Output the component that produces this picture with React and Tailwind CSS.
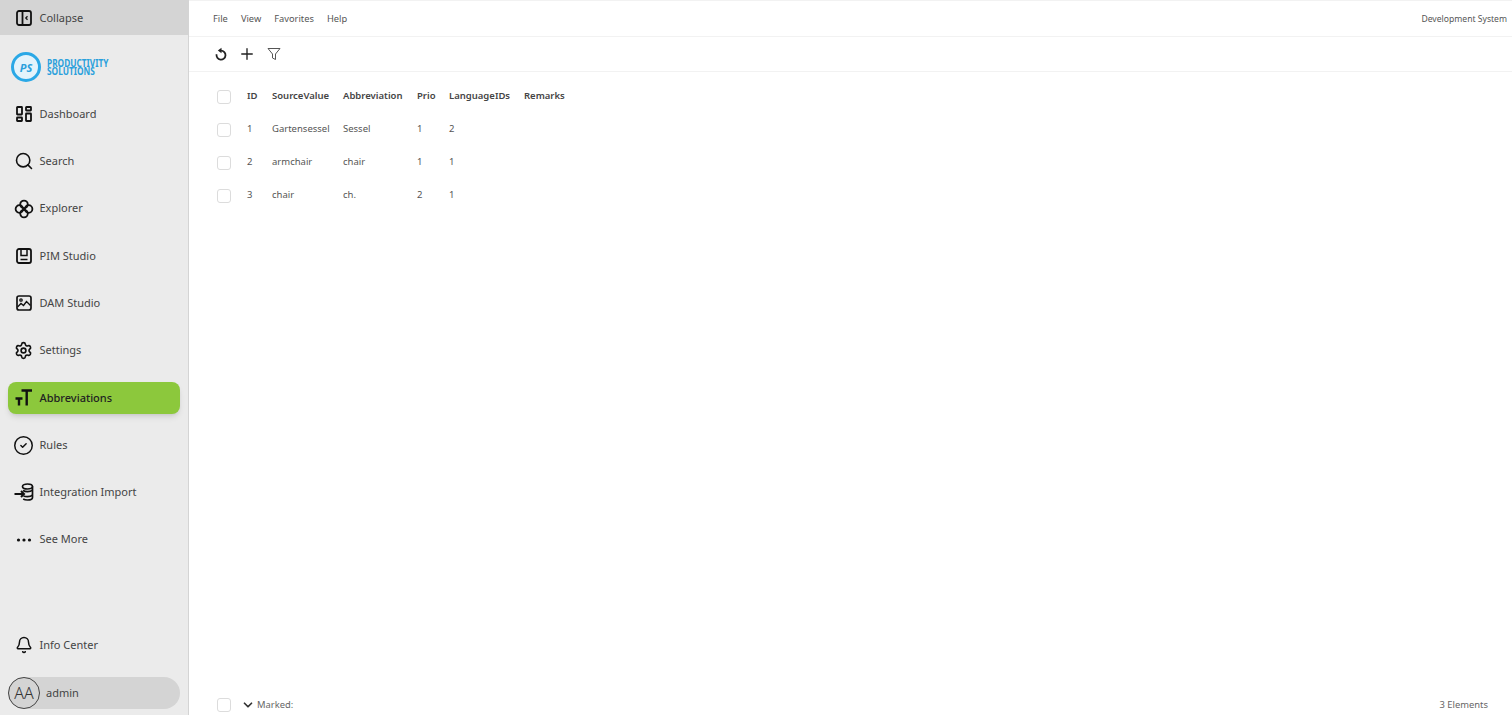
import { Bell, ChevronDown, CircleCheck, Plus, Search, Settings } from 'lucide-react'

const CollapseIcon = () => (
  <svg width="18" height="18" viewBox="0 0 18 18" fill="none" stroke="#111" strokeWidth="1.8">
    <rect x="2" y="2" width="14" height="14" rx="2" />
    <path d="M7.5 2v14" />
    <path d="M12.5 7.2 10.8 9l1.700 1.800" strokeWidth="1.3" />
  </svg>
)

const DashboardIcon = () => (
  <svg width="18" height="18" viewBox="0 0 18 18" fill="none" stroke="#111" strokeWidth="1.8">
    <rect x="2" y="2" width="5" height="7.5" rx="0.5" />
    <rect x="11" y="2" width="5" height="3.500" rx="0.5" />
    <rect x="2" y="12.500" width="5" height="3.500" rx="0.5" />
    <rect x="11" y="8.500" width="5" height="7.500" rx="0.5" />
  </svg>
)

const ExplorerIcon = () => (
  <svg width="20" height="20" viewBox="0 0 20 20" fill="none" stroke="#111" strokeWidth="1.8">
    <circle cx="10" cy="5.4" r="3.8" />
    <circle cx="14.6" cy="10" r="3.8" />
    <circle cx="10" cy="14.6" r="3.8" />
    <circle cx="5.4" cy="10" r="3.8" />
  </svg>
)

const PimIcon = () => (
  <svg width="18" height="18" viewBox="0 0 18 18" fill="none" stroke="#111" strokeWidth="1.8">
    <rect x="2" y="2" width="14" height="14" rx="2" />
    <path d="M6 2v6.500h6V2" strokeWidth="1.5" />
    <path d="M5.500 12.500h7" strokeWidth="1.5" />
  </svg>
)

const DamIcon = () => (
  <svg width="18" height="18" viewBox="0 0 18 18" fill="none" stroke="#111" strokeWidth="1.7">
    <rect x="2" y="2" width="14" height="14" rx="2" />
    <circle cx="6" cy="6" r="1.2" strokeWidth="1.3" />
    <path d="m2.500 13 3.500-3.500 2.500 2 3-4 4 4" strokeWidth="1.4" />
  </svg>
)

const TextSizeIcon = () => (
  <svg width="20" height="20" viewBox="0 0 20 20" fill="none" stroke="#111" strokeWidth="2.4">
    <path d="M7.500 2.500h10.500M12.700 2.500V17.500" />
    <path d="M1.500 10.500h7M5 10.500V17.500" />
  </svg>
)

const ImportIcon = () => (
  <svg width="20" height="20" viewBox="0 0 20 20" fill="none" stroke="#111" strokeWidth="1.7">
    <ellipse cx="13.500" cy="4.500" rx="5" ry="2.500" />
    <path d="M18.500 4.500v11c0 1.500-2.200 2.500-5 2.500-1.800 0-3.300-.4-4.300-1" />
    <path d="M9 8.500c1 .7 2.700 1.200 4.500 1.200 2 0 3.900-.5 5-1.500" />
    <path d="M9.500 14c1 .4 2.500.6 4 .6 2 0 3.900-.5 5-1.500" />
    <path d="M.5 12h9.500M7 9l3 3-3 3" strokeWidth="2" />
  </svg>
)

const MoreIcon = () => (
  <svg width="18" height="18" viewBox="0 0 18 18" fill="#111">
    <circle cx="3.500" cy="9" r="1.600" />
    <circle cx="9" cy="9" r="1.600" />
    <circle cx="14.500" cy="9" r="1.600" />
  </svg>
)

const ResetIcon = () => (
  <svg width="14" height="14" viewBox="0 0 14 14" fill="none" stroke="#222" strokeWidth="1.800">
    <path d="M7 3.600a4.500 4.500 0 1 1-4.400 3.600" />
    <path d="M7.500 .8v5.400L3.800 3.500z" fill="#222" stroke="none" />
  </svg>
)

const FunnelIcon = () => (
  <svg width="14" height="14" viewBox="0 0 14 14" fill="none" stroke="#555" strokeWidth="1">
    <path d="M1 1.500h12L8.500 7v5.500l-3-1.500V7z" strokeLinejoin="round" />
  </svg>
)

const navItems = [
  { label: 'Dashboard', icon: <DashboardIcon /> },
  { label: 'Search', icon: <Search size={20} strokeWidth={1.9} color="#111" /> },
  { label: 'Explorer', icon: <ExplorerIcon /> },
  { label: 'PIM Studio', icon: <PimIcon /> },
  { label: 'DAM Studio', icon: <DamIcon /> },
  { label: 'Settings', icon: <Settings size={19} strokeWidth={2.1} color="#111" /> },
  { label: 'Abbreviations', icon: <TextSizeIcon />, active: true },
  { label: 'Rules', icon: <CircleCheck size={21} strokeWidth={1.7} color="#111" /> },
  { label: 'Integration Import', icon: <ImportIcon /> },
  { label: 'See More', icon: <MoreIcon /> },
]

const rows = [
  { id: 1, source: 'Gartensessel', abbr: 'Sessel', prio: 1, lang: 2 },
  { id: 2, source: 'armchair', abbr: 'chair', prio: 1, lang: 1 },
  { id: 3, source: 'chair', abbr: 'ch.', prio: 2, lang: 1 },
]

const rowClasses = 'grid h-[33px] grid-cols-[30px_25px_71px_74px_32px_75px_60px] items-center'

function Checkbox() {
  return <span className="block h-[14px] w-[14px] rounded-[3px] border border-[#dcdcdc] bg-white" />
}

function NavItem({ label, icon, active }) {
  return (
    <div
      className={
        active
          ? 'mx-2 flex h-8 items-center rounded-lg bg-[#8cc83c] font-medium text-[#222] shadow-md'
          : 'mx-2 flex h-8 items-center text-[#444]'
      }
    >
      <span className="flex w-[31.5px] shrink-0 justify-center">{icon}</span>
      <span className="text-[11px]">{label}</span>
    </div>
  )
}

function Logo() {
  return (
    <div className="ml-[11px] flex h-[30px] items-center gap-[6px]">
      <div className="flex h-[30px] w-[30px] items-center justify-center rounded-full border-[3px] border-[#2aa8e6] bg-[#e3f3fb]">
        <span className="text-[11px] font-bold italic leading-none text-[#2aa0dc]">PS</span>
      </div>
      <div className="flex origin-left scale-x-[0.79] flex-col text-[10.5px] font-bold leading-[8px] text-[#2aa0dc]">
        <span>PRODUCTIVITY</span>
        <span>SOLUTIONS</span>
      </div>
    </div>
  )
}

export default function App() {
  return (
    <div className="flex h-[715px] w-[1512px] overflow-hidden bg-white font-['Noto_Sans',sans-serif]">
      <aside className="flex w-[189px] shrink-0 flex-col border-r border-[#d4d4d4] bg-[#ebebeb]">
        <div className="flex h-[35px] shrink-0 items-center bg-[#d4d4d4] pl-2 pt-px text-[#444]">
          <span className="flex w-[31.5px] shrink-0 justify-center"><CollapseIcon /></span>
          <span className="text-[11px]">Collapse</span>
        </div>
        <div className="mt-[17px]"><Logo /></div>
        <nav className="mt-4 flex flex-col gap-[15.3px]">
          {navItems.map((item) => (
            <NavItem key={item.label} {...item} />
          ))}
        </nav>
        <div className="mt-auto flex flex-col pb-[6px]">
          <div className="mx-2 flex h-8 items-center text-[#444]">
            <span className="flex w-[31.5px] shrink-0 justify-center">
              <Bell size={18} strokeWidth={2} color="#111" />
            </span>
            <span className="text-[11px]">Info Center</span>
          </div>
          <div className="mx-2 mt-4 flex h-8 items-center rounded-full bg-[#d4d4d4] text-[#444]">
            <span className="flex h-8 w-8 shrink-0 items-center justify-center rounded-full border border-[#444] text-[16px] font-light text-[#333]">
              AA
            </span>
            <span className="ml-[6px] text-[11px]">admin</span>
          </div>
        </div>
      </aside>

      <main className="flex min-w-0 flex-1 flex-col">
        <header className="flex h-[37px] shrink-0 items-center justify-between border-b border-t border-[#f2f2f2] pl-6 pr-[5px] text-[#555]">
          <div className="flex gap-[13px] text-[9.3px]">
            <span>File</span>
            <span>View</span>
            <span>Favorites</span>
            <span>Help</span>
          </div>
          <span className="pt-px text-[8.6px]">Development System</span>
        </header>

        <div className="flex h-[35px] shrink-0 items-center border-b border-[#f2f2f2] pl-[25px]">
          <ResetIcon />
          <Plus size={18} strokeWidth={1.8} color="#222" className="ml-[10px]" />
          <span className="ml-[11px] -mt-px"><FunnelIcon /></span>
        </div>

        <div className="flex-1 pl-7 pt-2 text-[9.5px] text-[#555]">
          <div className={`${rowClasses} font-semibold text-[#444]`}>
            <Checkbox />
            <span>ID</span>
            <span>SourceValue</span>
            <span>Abbreviation</span>
            <span>Prio</span>
            <span>LanguageIDs</span>
            <span>Remarks</span>
          </div>
          {rows.map((row) => (
            <div key={row.id} className={rowClasses}>
              <Checkbox />
              <span>{row.id}</span>
              <span>{row.source}</span>
              <span>{row.abbr}</span>
              <span>{row.prio}</span>
              <span>{row.lang}</span>
              <span />
            </div>
          ))}
        </div>

        <footer className="flex h-[20px] shrink-0 items-center justify-between pl-7 pr-6 text-[9.4px] text-[#666]">
          <div className="flex items-center">
            <Checkbox />
            <ChevronDown size={14} strokeWidth={3} color="#333" className="ml-[10px]" />
            <span className="ml-[2px]">Marked:</span>
          </div>
          <span>3 Elements</span>
        </footer>
      </main>
    </div>
  )
}
